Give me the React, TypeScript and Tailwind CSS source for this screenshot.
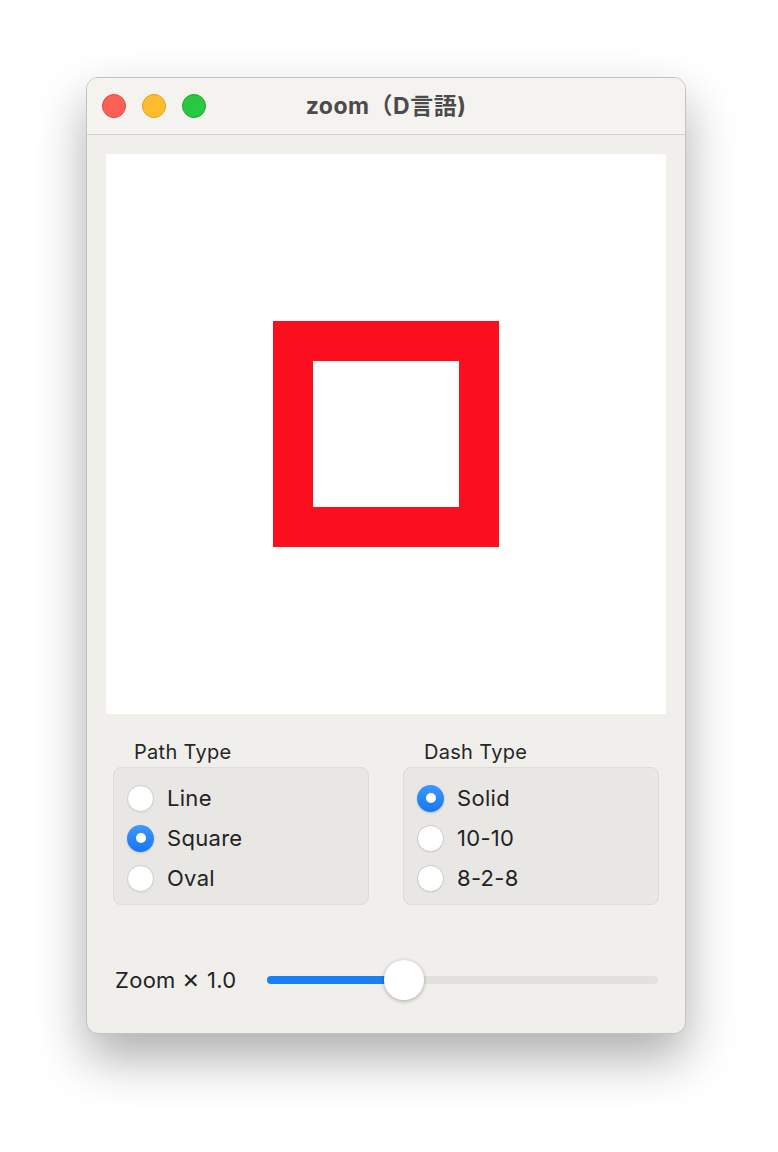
import React from "react";

const font = { fontFamily: "Inter, 'Noto Sans CJK JP', sans-serif" };

const Radio = ({ label, checked }: { label: string; checked?: boolean }) => (
  <div className="flex items-center h-[40px] pl-[13px]">
    {checked ? (
      <span className="w-[27px] h-[27px] rounded-full bg-gradient-to-b from-[#3d97ff] to-[#1577f2] flex items-center justify-center shadow-[0_1px_2px_rgba(0,0,0,0.2)]">
        <span className="w-[10px] h-[10px] rounded-full bg-white" />
      </span>
    ) : (
      <span className="w-[27px] h-[27px] rounded-full bg-white border border-[#cdcccb] shadow-[0_1px_1px_rgba(0,0,0,0.06)]" />
    )}
    <span className="ml-[13px] text-[22px] tracking-[0.3px] text-[#232323] leading-none">{label}</span>
  </div>
);

const Group = ({ title, items, selected }: { title: string; items: string[]; selected: number }) => (
  <div className="w-[256px]">
    <div className="pl-[21px] text-[20px] leading-[24px] tracking-[0.3px] text-[#262626] mb-[3px]">{title}</div>
    <div className="h-[138px] rounded-[8px] bg-[#e8e7e3] border border-[#dddcd8] pt-[10px]">
      {items.map((it, i) => (
        <Radio key={it} label={it} checked={i === selected} />
      ))}
    </div>
  </div>
);

export default function App() {
  return (
    <div className="w-[778px] h-[1152px] bg-white pt-[77px] pl-[86px]" style={font}>
      <div className="w-[600px] h-[957px] rounded-[12px] bg-[#f0efeb] border border-[#c4c3c0] shadow-[0_24px_50px_rgba(0,0,0,0.32)] overflow-hidden flex flex-col">
        <div className="h-[57px] shrink-0 bg-[#f4f3ef] border-b border-[#d2d1cd] flex items-center relative">
          <div className="flex gap-[16px] pl-[15px]">
            <span className="w-[24px] h-[24px] rounded-full bg-[#fe5f57] border border-[#e2463f]" />
            <span className="w-[24px] h-[24px] rounded-full bg-[#febc2e] border border-[#e1a116]" />
            <span className="w-[24px] h-[24px] rounded-full bg-[#28c840] border border-[#1aab29]" />
          </div>
          <div className="absolute inset-0 flex items-center justify-center text-[23px] tracking-[0.5px] font-bold text-[#4b4b4b]">
            zoom（D言語)
          </div>
        </div>

        <div className="mt-[19px] mx-[19px] w-[560px] h-[560px] bg-white flex items-center justify-center">
          <div className="w-[226px] h-[226px] border-[40px] border-[#fb0e1e]" />
        </div>

        <div className="flex gap-[34px] px-[26px] mt-[26px]">
          <Group title="Path Type" items={["Line", "Square", "Oval"]} selected={1} />
          <Group title="Dash Type" items={["Solid", "10-10", "8-2-8"]} selected={0} />
        </div>

        <div className="flex items-center h-[40px] mt-[55px] pl-[28px] pr-[27px]">
          <span className="text-[22px] tracking-[0.3px] text-[#232323] whitespace-nowrap w-[152px]">
            Zoom <span className="text-[21px]">✕</span> 1.0
          </span>
          <div className="flex-1 relative h-[40px] flex items-center">
            <div className="w-full h-[8px] rounded-full bg-[#e2e1dd]" />
            <div className="absolute left-0 h-[8px] w-[137px] rounded-full bg-[#1a7ff5]" />
            <div className="absolute left-[117px] w-[40px] h-[40px] rounded-full bg-white shadow-[0_1px_4px_rgba(0,0,0,0.3)]" />
          </div>
        </div>
      </div>
    </div>
  );
}
